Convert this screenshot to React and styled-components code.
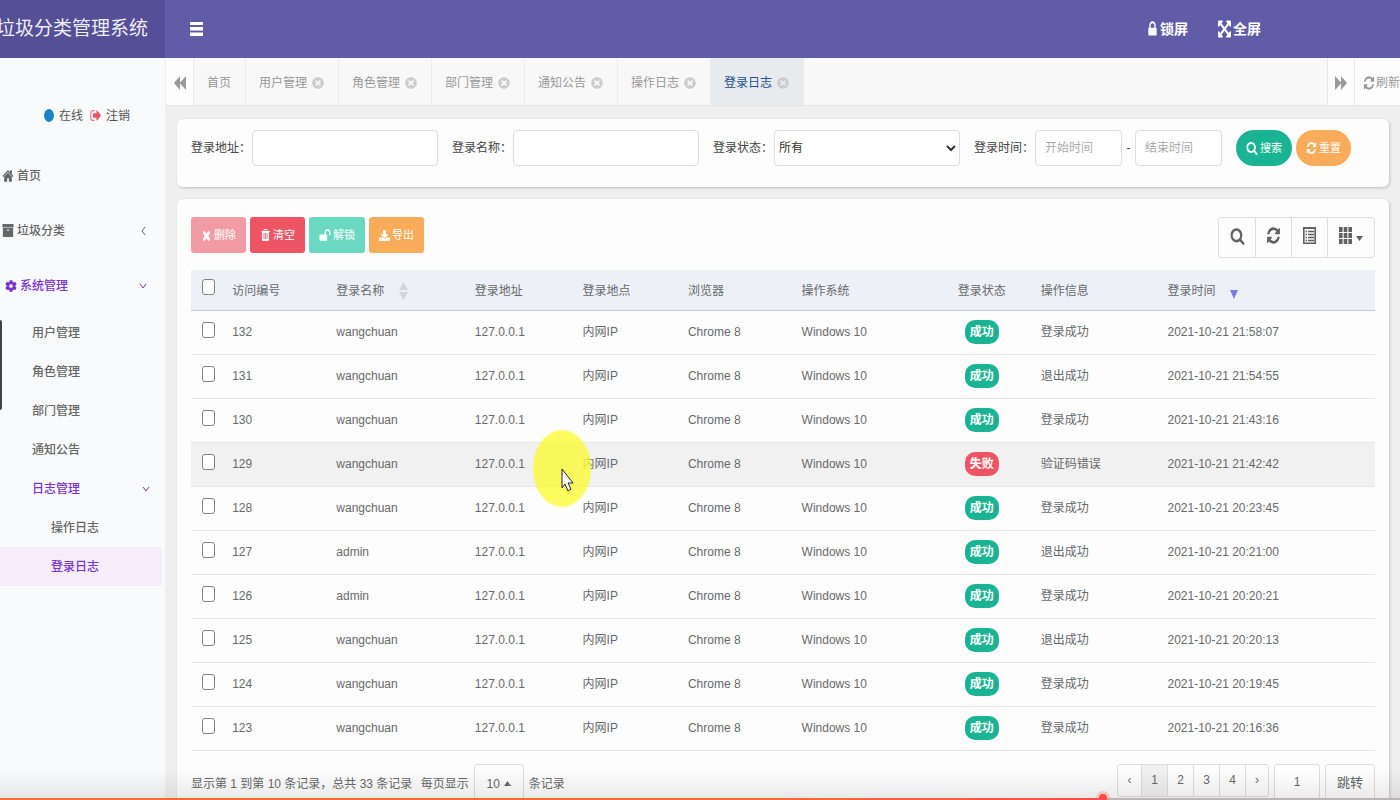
import React, { useState } from 'react';
import styled, { createGlobalStyle, css } from 'styled-components';
import { FaCog, FaDownload, FaTimesCircle } from 'react-icons/fa';

const GlobalStyle = createGlobalStyle`
  * {
    box-sizing: border-box;
  }

  body {
    margin: 0;
    overflow: hidden;
    color: #676a6c;
    background: #efefef;
    font-family: 'Liberation Sans', 'Noto Sans CJK SC', sans-serif;
    font-size: 12px;
    line-height: 16px;
  }

  button, input, select {
    margin: 0;
    font: inherit;
    color: inherit;
  }

  button {
    padding: 0;
    border: 0;
    background: none;
    cursor: pointer;
  }

  a {
    color: inherit;
    text-decoration: none;
  }

  svg {
    display: block;
    flex: none;
  }
`;

const Page = styled.div`
  display: flex;
  height: 100vh;
  overflow: hidden;
`;

/* ---------- sidebar ---------- */

const Sidebar = styled.aside`
  display: flex;
  flex-direction: column;
  flex: none;
  width: 165px;
  background: #f8fafc;
`;

const Brand = styled.div`
  display: flex;
  flex: none;
  align-items: center;
  justify-content: flex-end;
  height: 58px;
  padding-right: 17px;
  overflow: hidden;
  background: #554f97;
  color: #eeedf8;
  font-size: 19px;
  line-height: 28px;
  white-space: nowrap;
`;

const UserStatus = styled.div`
  display: flex;
  align-items: center;
  gap: 5px;
  height: 90px;
  padding: 25px 0 0 44px;
  color: #555;
`;

const OnlineDot = styled.span`
  width: 10px;
  height: 13px;
  border-radius: 50%;
  background: #1c84c6;
`;

const UserLink = styled.a`
  display: flex;
  align-items: center;
  gap: 4px;
  margin-left: 2px;

  svg {
    color: #ed5565;
  }
`;

const Menu = styled.nav`
  display: flex;
  flex-direction: column;
`;

const MenuItem = styled.a`
  display: flex;
  align-items: center;
  gap: 3px;
  height: 55px;
  padding: 0 18px 0 ${({ $indent }) => $indent || 2}px;
  color: ${({ $active }) => ($active ? '#7a33cc' : '#666')};
  font-weight: 500;

  svg:last-child:not(:first-child) {
    margin-left: auto;
  }
`;

const SubItem = styled(MenuItem)`
  height: 39px;
  margin-right: 3px;
  padding: 0 12px 0 ${({ $deep }) => ($deep ? 51 : 32)}px;
  background: ${({ $current }) => ($current ? '#f5edfc' : 'transparent')};

  svg:last-child {
    margin-left: auto;
  }
`;

const EdgeHandle = styled.span`
  position: fixed;
  top: 320px;
  left: 0;
  width: 2px;
  height: 90px;
  border-radius: 0 2px 2px 0;
  background: #444;
`;

/* ---------- header and tabs ---------- */

const Main = styled.div`
  display: flex;
  flex: 1;
  flex-direction: column;
  min-width: 0;
`;

const TopBar = styled.header`
  display: flex;
  flex: none;
  align-items: center;
  justify-content: space-between;
  height: 58px;
  padding: 0 139px 0 25px;
  background: #615ca8;
  color: #fff;
`;

const TopActions = styled.div`
  display: flex;
  gap: 29px;
`;

const TopButton = styled.button`
  display: flex;
  align-items: center;
  gap: 1px;
  font-size: 14px;
  font-weight: 700;
`;

const TabBar = styled.div`
  display: flex;
  flex: none;
  height: 48px;
  border-left: 1px solid #ececec;
  border-bottom: 1px solid #e4e4e4;
  background: #f8f8f8;
  color: #999;
`;

const TabScroll = styled.button`
  display: flex;
  align-items: center;
  justify-content: center;
  width: 28px;
  padding-top: 2px;
  border-left: ${({ $right }) => ($right ? '1px solid #e8e8e8' : '0')};
  border-right: 1px solid #e8e8e8;
  background: #fdfdfd;
`;

const TabList = styled.nav`
  display: flex;
  flex: 1;
`;

const Tab = styled.a`
  display: flex;
  align-items: center;
  gap: 5px;
  padding: 2px 14px 0 13px;
  border-right: 1px solid #ececec;

  svg {
    color: #ccc;
  }

  ${({ $active }) =>
    $active &&
    css`
      background: #e7ebee;
      color: #23508e;
    `}
`;

const RefreshButton = styled.button`
  display: flex;
  align-items: center;
  gap: 1px;
  width: 45px;
  padding: 2px 0 0 8px;
  background: #fdfdfd;
  white-space: nowrap;
`;

/* ---------- content ---------- */

const Content = styled.main`
  display: flex;
  flex: 1;
  flex-direction: column;
  gap: 12px;
  min-height: 0;
  padding: 13px 11px 0 12px;
`;

const Card = styled.section`
  flex: none;
  padding: ${({ $top }) => $top}px 14px 21px;
  border-radius: 6px;
  background: #fdfdfd;
  box-shadow: 1px 1px 3px rgba(0, 0, 0, 0.2);
`;

const FilterForm = styled.form`
  display: flex;
  gap: 14px;
  color: #444;
`;

const Field = styled.div`
  display: flex;
  align-items: center;
  gap: 1px;

  label {
    white-space: nowrap;
  }
`;

const controlStyle = css`
  width: ${({ $short }) => ($short ? 87 : 186)}px;
  height: 36px;
  border: 1px solid #ddd;
  border-radius: 4px;
  background: #fff;
  outline: none;
`;

const TextInput = styled.input`
  ${controlStyle}
  padding: 0 9px;

  &::placeholder {
    color: #aaa;
    opacity: 1;
  }
`;

const StatusSelect = styled.select`
  ${controlStyle}
  padding: 0;
  color: #333;
`;

const Dash = styled.span`
  width: 11px;
  text-align: center;
`;

const ButtonRow = styled.div`
  display: flex;
  gap: 4px;
`;

const ActionButton = styled.button`
  display: flex;
  align-items: center;
  gap: 2px;
  height: 36px;
  padding: 0 10px;
  border-radius: ${({ $round }) => ($round ? 18 : 3)}px;
  background: ${({ $color }) => $color};
  color: #fff;
  font-size: 11px;
  white-space: nowrap;
`;

const Toolbar = styled.div`
  display: flex;
  align-items: flex-start;
  justify-content: space-between;
  margin-bottom: 12px;
`;

const ToolGroup = styled.div`
  display: flex;
  height: 41px;
  border: 1px solid #ddd;
  border-radius: 3px;
  color: #5f6163;
`;

const ToolButton = styled.button`
  display: flex;
  align-items: center;
  justify-content: center;
  gap: 4px;
  width: ${({ $wide }) => ($wide ? 47 : 36)}px;
  padding-bottom: 4px;

  &:not(:first-child) {
    border-left: 1px solid #ddd;
  }

  svg:nth-child(2) {
    margin-top: 5px;
  }
`;

const LogTable = styled.table`
  width: 100%;
  table-layout: fixed;
  border-collapse: collapse;

  th,
  td {
    padding: 0 8px;
    text-align: left;
    font-weight: 400;
    white-space: nowrap;
  }

  th {
    padding-top: 2px;
  }

  th:nth-child(8),
  td:nth-child(8) {
    text-align: center;
  }

  th:first-child,
  td:first-child {
    padding: 0 0 5px 11px;
  }

  thead tr {
    height: 40px;
    border-bottom: 1px solid #c6c9cc;
    background: #edf0f7;
  }
`;

const LogRow = styled.tr`
  height: 44px;
  border-bottom: 1px solid #e6e6e6;
  background: ${({ $hover }) => ($hover ? '#f1f1f1' : 'transparent')};
`;

const Checkbox = styled.input`
  display: block;
  width: 13px;
  height: 16px;
  margin: 0;
  border: 1px solid #808080;
  border-radius: 3px;
  background: #fff;
  appearance: none;

  &:checked {
    background: #1a73e8;
  }
`;

const HeadLabel = styled.span`
  display: flex;
  align-items: center;
  gap: 15px;
`;

const Badge = styled.span`
  display: inline-block;
  padding: 4px 5px;
  border-radius: 10px;
  background: ${({ $ok }) => ($ok ? '#1ab394' : '#ed5565')};
  color: #fff;
  font-weight: 700;
`;

const TableFooter = styled.div`
  display: flex;
  align-items: flex-start;
  justify-content: space-between;
  padding-top: 13px;
`;

const PageInfo = styled.div`
  display: flex;
  align-items: center;
  gap: 5px;
`;

const PageSize = styled.button`
  display: flex;
  align-items: center;
  justify-content: center;
  gap: 4px;
  width: 50px;
  height: 40px;
  border: 1px solid #ddd;
  border-radius: 3px;
`;

const Pager = styled.div`
  display: flex;
  gap: 5px;
`;

const PageList = styled.nav`
  display: flex;
  height: 33px;
  border: 1px solid #ddd;
  border-radius: 3px;
`;

const PageLink = styled.a`
  display: flex;
  align-items: center;
  justify-content: center;
  width: ${({ $edge }) => ($edge ? 23 : 26)}px;
  background: ${({ $active }) => ($active ? '#f0f0f0' : 'transparent')};

  & + & {
    border-left: 1px solid #ddd;
  }
`;

const PageInput = styled.input`
  width: 46px;
  height: 36px;
  border: 1px solid #ddd;
  border-radius: 3px;
  background: #fff;
  text-align: center;
`;

const JumpButton = styled.button`
  width: 50px;
  height: 38px;
  border: 1px solid #ddd;
  border-radius: 3px;
  font-size: 13px;
`;

/* ---------- video overlay ---------- */

const Spotlight = styled.div`
  position: fixed;
  top: 429px;
  left: 532px;
  width: 60px;
  height: 79px;
  border-radius: 50%;
  background: radial-gradient(closest-side, rgba(251, 251, 56, 0.8) 94%, rgba(251, 251, 56, 0));
  pointer-events: none;
`;

const Pointer = styled.svg`
  position: fixed;
  top: 468px;
  left: 561px;
  pointer-events: none;
`;

const Player = styled.div`
  position: fixed;
  right: 0;
  bottom: 0;
  left: 0;
  height: 30px;
  background: linear-gradient(rgba(0, 0, 0, 0), rgba(0, 0, 0, 0.08));
  pointer-events: none;
`;

const Track = styled.div`
  position: absolute;
  right: 0;
  bottom: 0;
  left: 0;
  height: 2px;
  background: #b9b5b5;
`;

const Played = styled.div`
  position: relative;
  height: 100%;
  background: linear-gradient(90deg, #ff6a33, #ff6a33 70%, #ff4b4b);

  &::after {
    content: '';
    position: absolute;
    top: -4px;
    right: -4px;
    width: 8px;
    height: 8px;
    border-radius: 50%;
    background: #ff4b4b;
    box-shadow: 0 0 0 3px rgba(255, 110, 70, 0.3);
  }
`;

/* ---------- icons ---------- */

const glyphs = {
  expand:
    'M1411 541l-355 355 355 355 144-144q29-31 70-14 39 17 39 59v448q0 26-19 45t-45 19h-448q-42 0-59-40-17-39 14-69l144-144-355-355-355 355 144 144q31 30 14 69-17 40-59 40h-448q-26 0-45-19t-19-45v-448q0-42 40-59 39-17 69 14l144 144 355-355-355-355-144 144q-19 19-45 19-12 0-24-5-40-17-40-59v-448q0-26 19-45t45-19h448q42 0 59 40 17 39-14 69l-144 144 355 355 355-355-144-144q-31-30-14-69 17-40 59-40h448q26 0 45 19t19 45v448q0 42-39 59-13 5-25 5-26 0-45-19z',
  refresh:
    'M1639 1056q0 5-1 7-64 268-268 434.5t-478 166.5q-146 0-282.5-55t-243.5-157l-129 129q-19 19-45 19t-45-19-19-45v-448q0-26 19-45t45-19h448q26 0 45 19t19 45-19 45l-137 137q71 66 161 102t187 36q134 0 250-65t186-179q11-17 53-117 8-23 30-23h192q13 0 22.5 9.5t9.5 22.5zm25-800v448q0 26-19 45t-45 19h-448q-26 0-45-19t-19-45 19-45l138-138q-148-137-349-137-134 0-250 65t-186 179q-11 17-53 117-8 23-30 23h-199q-13 0-22.5-9.5t-9.5-22.5v-7q65-268 270-434.5t480-166.5q146 0 284 55.5t245 156.5l130-129q19-19 45-19t45 19 19 45z',
  search:
    'M1216 832q0-185-131.5-316.5t-316.5-131.5-316.5 131.5-131.5 316.5 131.5 316.5 316.5 131.5 316.5-131.5 131.5-316.5zm512 832q0 52-38 90t-90 38q-54 0-90-38l-343-342q-179 124-399 124-143 0-273.5-55.5t-225-150-150-225-55.5-273.5 55.5-273.5 150-225 225-150 273.5-55.5 273.5 55.5 225 150 150 225 55.5 273.5q0 220-124 399l343 343q37 37 37 90z',
  home:
    'M1472 992v480q0 26-19 45t-45 19h-384v-384h-256v384h-384q-26 0-45-19t-19-45v-480q0-1 .5-3t.5-3l575-474 575 474q1 2 1 6zm223-69l-62 74q-8 9-21 11h-3q-13 0-21-7l-692-577-692 577q-12 8-24 7-13-2-21-11l-62-74q-8-10-7-23.5t11-21.5l719-599q32-26 76-26t76 26l244 204v-195q0-14 9-23t23-9h192q14 0 23 9t9 23v408l219 182q10 8 11 21.5t-7 23.5z',
  signOut:
    'M704 1440q0 4 1 20t.5 26.5-3 23.5-10 19.5-20.5 6.5h-320q-119 0-203.5-84.5t-84.5-203.5v-704q0-119 84.5-203.5t203.5-84.5h320q13 0 22.5 9.5t9.5 22.5q0 4 1 20t.5 26.5-3 23.5-10 19.5-20.5 6.5h-320q-66 0-113 47t-47 113v704q0 66 47 113t113 47h312l11.5 1 11.5 3 8 5.5 7 9 2 13.5zm928-544q0 26-19 45l-544 544q-19 19-45 19t-45-19-19-45v-288h-448q-26 0-45-19t-19-45v-384q0-26 19-45t45-19h448v-288q0-26 19-45t45-19 45 19l544 544q19 19 19 45z',
  archive:
    'M1088 832q0-26-19-45t-45-19h-256q-26 0-45 19t-19 45 19 45 45 19h256q26 0 45-19t19-45zm576-192v960q0 26-19 45t-45 19h-1408q-26 0-45-19t-19-45v-960q0-26 19-45t45-19h1408q26 0 45 19t19 45zm64-448v256q0 26-19 45t-45 19h-1536q-26 0-45-19t-19-45v-256q0-26 19-45t45-19h1536q26 0 45 19t19 45z',
  times:
    'M1490 1322q0 40-28 68l-136 136q-28 28-68 28t-68-28l-294-294-294 294q-28 28-68 28t-68-28l-136-136q-28-28-28-68t28-68l294-294-294-294q-28-28-28-68t28-68l136-136q28-28 68-28t68 28l294 294 294-294q28-28 68-28t68 28l136 136q28 28 28 68t-28 68l-294 294 294 294q28 28 28 68z',
  trash:
    'M704 1376v-704q0-14-9-23t-23-9h-64q-14 0-23 9t-9 23v704q0 14 9 23t23 9h64q14 0 23-9t9-23zm256 0v-704q0-14-9-23t-23-9h-64q-14 0-23 9t-9 23v704q0 14 9 23t23 9h64q14 0 23-9t9-23zm256 0v-704q0-14-9-23t-23-9h-64q-14 0-23 9t-9 23v704q0 14 9 23t23 9h64q14 0 23-9t9-23zm-544-992h448l-48-117q-7-9-17-11h-317q-10 2-17 11zm928 32v64q0 14-9 23t-23 9h-96v948q0 83-47 143.5t-113 60.5h-832q-66 0-113-58.5t-47-141.5v-952h-96q-14 0-23-9t-9-23v-64q0-14 9-23t23-9h309l70-167q15-37 54-63t79-26h320q40 0 79 26t54 63l70 167h309q14 0 23 9t9 23z',
  lock:
    'M640 768h512v-192q0-106-75-181t-181-75-181 75-75 181v192zm832 96v576q0 40-28 68t-68 28h-960q-40 0-68-28t-28-68v-576q0-40 28-68t68-28h32v-192q0-184 132-316t316-132 316 132 132 316v192h32q40 0 68 28t28 68z',
  unlock:
    'M1728 576v256q0 26-19 45t-45 19h-64q-26 0-45-19t-19-45v-256q0-106-75-181t-181-75-181 75-75 181v192h96q40 0 68 28t28 68v576q0 40-28 68t-68 28h-960q-40 0-68-28t-28-68v-576q0-40 28-68t68-28h672v-192q0-185 131.5-316.5t316.5-131.5 316.5 131.5 131.5 316.5z',
};

const Glyph = ({ name, width, height }) => (
  <svg width={width} height={height} viewBox="0 0 1792 1792" preserveAspectRatio="none" fill="currentColor" aria-hidden="true">
    <path d={glyphs[name]} />
  </svg>
);

const BarsIcon = () => (
  <svg width="13" height="14" viewBox="0 0 13 14" fill="currentColor" aria-hidden="true">
    <path d="M0 0h13v3H0zM0 5h13v3.500H0zM0 10.500h13V14H0z" />
  </svg>
);

const SkipIcon = ({ right }) => (
  <svg width="12" height="14" viewBox="0 0 12 14" fill="currentColor" aria-hidden="true">
    <path d={right ? 'M0 0l6 6.500V0l6 7-6 7V7.500L0 14z' : 'M12 0L6 6.500V0L0 7l6 7V7.500l6 6.500z'} />
  </svg>
);

const Chevron = ({ down }) => (
  <svg width="8" height="10" viewBox="0 0 8 10" fill="none" stroke="currentColor" aria-hidden="true">
    <path d={down ? 'M1 3l3 4 3-4' : 'M6 1L3 5l3 4'} />
  </svg>
);

const Caret = ({ up }) => (
  <svg width="7" height="5" viewBox="0 0 7 5" fill="currentColor" aria-hidden="true">
    <path d={up ? 'M0 5h7L3.5 0z' : 'M0 0h7L3.5 5z'} />
  </svg>
);

const SortBoth = () => (
  <svg width="9" height="18" viewBox="0 0 9 18" fill="#d3d5da" aria-hidden="true">
    <path d="M0 8h9L4.500 0zM0 10h9L4.500 18z" />
  </svg>
);

const SortDown = () => (
  <svg width="8" height="16" viewBox="0 0 8 16" fill="#7b7be0" aria-hidden="true">
    <path d="M0 7h8L4 16z" />
  </svg>
);

const ListIcon = () => (
  <svg width="13" height="17" viewBox="0 0 13 17" fill="none" stroke="currentColor" aria-hidden="true">
    <path d="M.8 1v15.200h11.400V1z" strokeWidth="1.600" />
    <path d="M0 1h13" strokeWidth="2" />
    <path d="M2.500 4.500h1.500M2.500 7.500h1.500M2.500 10.500h1.500M2.500 13.500h1.500M5 4.500h6M5 7.500h6M5 10.500h6M5 13.500h6" strokeWidth="1.500" />
  </svg>
);

const GridIcon = () => (
  <svg width="13" height="17" viewBox="0 0 13 17" fill="currentColor" aria-hidden="true">
    <path d="M0 0h3.600v5H0zM4.700 0h3.600v5H4.700zM9.400 0H13v5H9.400zM0 6h3.600v5H0zM4.700 6h3.600v5H4.700zM9.400 6H13v5H9.400zM0 12h3.600v5H0zM4.700 12h3.600v5H4.700zM9.400 12H13v5H9.400z" />
  </svg>
);

/* ---------- data ---------- */

const tabs = ['首页', '用户管理', '角色管理', '部门管理', '通知公告', '操作日志', '登录日志'];

const columns = [
  { label: '访问编号', width: '8.8%' },
  { label: '登录名称', width: '11.7%', sort: <SortBoth /> },
  { label: '登录地址', width: '9.1%' },
  { label: '登录地点', width: '8.9%' },
  { label: '浏览器', width: '9.6%' },
  { label: '操作系统', width: '11.6%' },
  { label: '登录状态', width: '8.6%' },
  { label: '操作信息', width: '10.7%' },
  { label: '登录时间', width: '18.2%', sort: <SortDown /> },
];

const logs = [
  { id: 132, user: 'wangchuan', ok: true, message: '登录成功', time: '2021-10-21 21:58:07' },
  { id: 131, user: 'wangchuan', ok: true, message: '退出成功', time: '2021-10-21 21:54:55' },
  { id: 130, user: 'wangchuan', ok: true, message: '登录成功', time: '2021-10-21 21:43:16' },
  { id: 129, user: 'wangchuan', ok: false, message: '验证码错误', time: '2021-10-21 21:42:42' },
  { id: 128, user: 'wangchuan', ok: true, message: '登录成功', time: '2021-10-21 20:23:45' },
  { id: 127, user: 'admin', ok: true, message: '退出成功', time: '2021-10-21 20:21:00' },
  { id: 126, user: 'admin', ok: true, message: '登录成功', time: '2021-10-21 20:20:21' },
  { id: 125, user: 'wangchuan', ok: true, message: '退出成功', time: '2021-10-21 20:20:13' },
  { id: 124, user: 'wangchuan', ok: true, message: '登录成功', time: '2021-10-21 20:19:45' },
  { id: 123, user: 'wangchuan', ok: true, message: '登录成功', time: '2021-10-21 20:16:36' },
];

const squeeze = { preserveAspectRatio: 'none', 'aria-hidden': true };

const App = () => {
  const [selected, setSelected] = useState([]);
  const [page, setPage] = useState('1');

  const toggle = (id) =>
    setSelected((ids) => (ids.includes(id) ? ids.filter((item) => item !== id) : [...ids, id]));

  const toggleAll = () => setSelected(selected.length === logs.length ? [] : logs.map((log) => log.id));

  return (
    <Page>
      <GlobalStyle />
      <Sidebar>
        <Brand>垃圾分类管理系统</Brand>
        <UserStatus>
          <OnlineDot />
          在线
          <UserLink href="#logout">
            <Glyph name="signOut" width={12} height={15} />
            注销
          </UserLink>
        </UserStatus>
        <Menu>
          <MenuItem href="#home">
            <Glyph name="home" width={12} height={16} />
            <span>首页</span>
          </MenuItem>
          <MenuItem href="#garbage">
            <Glyph name="archive" width={12} height={15} />
            <span>垃圾分类</span>
            <Chevron />
          </MenuItem>
          <MenuItem href="#system" $active $indent={5}>
            <FaCog {...squeeze} width={11} height={14} />
            <span>系统管理</span>
            <Chevron down />
          </MenuItem>
          <SubItem href="#user">用户管理</SubItem>
          <SubItem href="#role">角色管理</SubItem>
          <SubItem href="#dept">部门管理</SubItem>
          <SubItem href="#notice">通知公告</SubItem>
          <SubItem href="#log" $active>
            日志管理
            <Chevron down />
          </SubItem>
          <SubItem href="#operlog" $deep>操作日志</SubItem>
          <SubItem href="#logininfo" $deep $active $current>登录日志</SubItem>
        </Menu>
        <EdgeHandle />
      </Sidebar>

      <Main>
        <TopBar>
          <button type="button" aria-label="菜单">
            <BarsIcon />
          </button>
          <TopActions>
            <TopButton type="button">
              <Glyph name="lock" width={13} height={18} />
              锁屏
            </TopButton>
            <TopButton type="button">
              <Glyph name="expand" width={15} height={20} />
              全屏
            </TopButton>
          </TopActions>
        </TopBar>

        <TabBar>
          <TabScroll type="button" aria-label="向左">
            <SkipIcon />
          </TabScroll>
          <TabList>
            {tabs.map((tab, index) => (
              <Tab key={tab} href={`#${tab}`} $active={index === tabs.length - 1}>
                {tab}
                {index > 0 && <FaTimesCircle {...squeeze} width={11} height={13} />}
              </Tab>
            ))}
          </TabList>
          <TabScroll type="button" aria-label="向右" $right>
            <SkipIcon right />
          </TabScroll>
          <RefreshButton type="button">
            <Glyph name="refresh" width={12} height={16} />
            刷新
          </RefreshButton>
        </TabBar>

        <Content>
          <Card $top={11}>
            <FilterForm onSubmit={(event) => event.preventDefault()}>
              <Field>
                <label htmlFor="ipaddr">登录地址：</label>
                <TextInput id="ipaddr" type="text" />
              </Field>
              <Field>
                <label htmlFor="loginName">登录名称：</label>
                <TextInput id="loginName" type="text" />
              </Field>
              <Field>
                <label htmlFor="status">登录状态：</label>
                <StatusSelect id="status" defaultValue="">
                  <option value="">所有</option>
                  <option value="0">成功</option>
                  <option value="1">失败</option>
                </StatusSelect>
              </Field>
              <Field>
                <label htmlFor="startTime">登录时间：</label>
                <TextInput id="startTime" type="text" placeholder="开始时间" $short />
                <Dash>-</Dash>
                <TextInput type="text" placeholder="结束时间" aria-label="结束时间" $short />
              </Field>
              <ButtonRow>
                <ActionButton type="submit" $color="#1ab394" $round>
                  <Glyph name="search" width={12} height={14} />
                  搜索
                </ActionButton>
                <ActionButton type="reset" $color="#f8ac59" $round>
                  <Glyph name="refresh" width={11} height={14} />
                  重置
                </ActionButton>
              </ButtonRow>
            </FilterForm>
          </Card>

          <Card $top={18}>
            <Toolbar>
              <ButtonRow>
                <ActionButton type="button" $color="#f39ba4">
                  <Glyph name="times" width={11} height={15} />
                  删除
                </ActionButton>
                <ActionButton type="button" $color="#ed5565">
                  <Glyph name="trash" width={11} height={14} />
                  清空
                </ActionButton>
                <ActionButton type="button" $color="#6bd8c1">
                  <Glyph name="unlock" width={12} height={15} />
                  解锁
                </ActionButton>
                <ActionButton type="button" $color="#f8ac59">
                  <FaDownload {...squeeze} width={12} height={13} />
                  导出
                </ActionButton>
              </ButtonRow>
              <ToolGroup>
                <ToolButton type="button" aria-label="搜索">
                  <Glyph name="search" width={15} height={18} />
                </ToolButton>
                <ToolButton type="button" aria-label="刷新">
                  <Glyph name="refresh" width={15} height={19} />
                </ToolButton>
                <ToolButton type="button" aria-label="切换">
                  <ListIcon />
                </ToolButton>
                <ToolButton type="button" aria-label="列" $wide>
                  <GridIcon />
                  <Caret />
                </ToolButton>
              </ToolGroup>
            </Toolbar>

            <LogTable>
              <colgroup>
                <col width="2.8%" />
                {columns.map((column) => (
                  <col key={column.label} width={column.width} />
                ))}
              </colgroup>
              <thead>
                <tr>
                  <th>
                    <Checkbox
                      type="checkbox"
                      aria-label="全选"
                      checked={selected.length === logs.length}
                      onChange={toggleAll}
                    />
                  </th>
                  {columns.map((column) => (
                    <th key={column.label}>
                      {column.sort ? (
                        <HeadLabel>
                          {column.label}
                          {column.sort}
                        </HeadLabel>
                      ) : (
                        column.label
                      )}
                    </th>
                  ))}
                </tr>
              </thead>
              <tbody>
                {logs.map((log) => (
                  <LogRow key={log.id} $hover={log.id === 129}>
                    <td>
                      <Checkbox
                        type="checkbox"
                        aria-label={`${log.id}`}
                        checked={selected.includes(log.id)}
                        onChange={() => toggle(log.id)}
                      />
                    </td>
                    <td>{log.id}</td>
                    <td>{log.user}</td>
                    <td>127.0.0.1</td>
                    <td>内网IP</td>
                    <td>Chrome 8</td>
                    <td>Windows 10</td>
                    <td>
                      <Badge $ok={log.ok}>{log.ok ? '成功' : '失败'}</Badge>
                    </td>
                    <td>{log.message}</td>
                    <td>{log.time}</td>
                  </LogRow>
                ))}
              </tbody>
            </LogTable>

            <TableFooter>
              <PageInfo>
                <span>显示第 1 到第 10 条记录，总共 33 条记录</span>
                <span>&nbsp;每页显示</span>
                <PageSize type="button">
                  10
                  <Caret up />
                </PageSize>
                <span>条记录</span>
              </PageInfo>
              <Pager>
                <PageList>
                  <PageLink href="#prev" $edge>‹</PageLink>
                  <PageLink href="#1" $active>1</PageLink>
                  <PageLink href="#2">2</PageLink>
                  <PageLink href="#3">3</PageLink>
                  <PageLink href="#4">4</PageLink>
                  <PageLink href="#next" $edge>›</PageLink>
                </PageList>
                <PageInput
                  type="text"
                  aria-label="页码"
                  value={page}
                  onChange={(event) => setPage(event.target.value)}
                />
                <JumpButton type="button">跳转</JumpButton>
              </Pager>
            </TableFooter>
          </Card>
        </Content>
      </Main>

      <Spotlight />
      <Pointer width="13" height="24" viewBox="0 0 13 24" fill="#fff" stroke="#222" aria-hidden="true">
        <path d="M1 1v19l3-4 3 7 3-2-3-6h5z" />
      </Pointer>
      <Player>
        <Track>
          <Played style={{ width: `${(1103 / 1400) * 100}%` }} />
        </Track>
      </Player>
    </Page>
  );
};

export default App;
